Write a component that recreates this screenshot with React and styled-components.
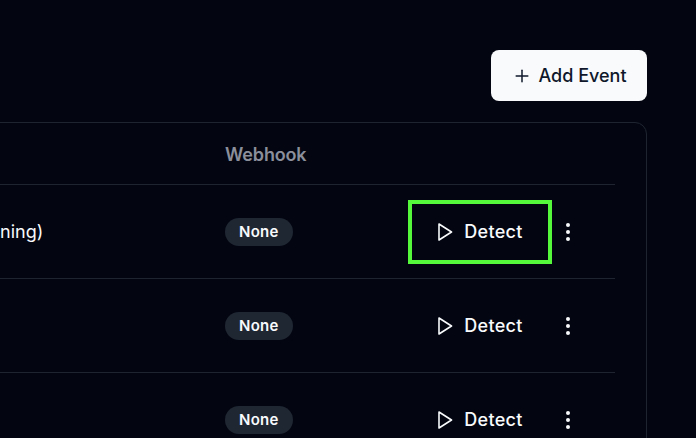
import React from "react";
import styled, { createGlobalStyle } from "styled-components";
import { Plus } from "lucide-react";

const GlobalStyle = createGlobalStyle`
  html, body {
    margin: 0;
    height: 100%;
    overflow: hidden;
    background: #030611;
  }
`;

const Page = styled.div`
  height: 438px;
  overflow: hidden;
  padding: 50px 49px 0 0;
  box-sizing: border-box;
  font-family: Inter, "Liberation Sans", sans-serif;
  color: #f8fafc;
`;

const Toolbar = styled.div`
  display: flex;
  justify-content: flex-end;
`;

const AddButton = styled.button`
  display: flex;
  align-items: center;
  justify-content: center;
  gap: 6px;
  width: 156px;
  height: 51px;
  padding: 0 0 0 1px;
  border: 0;
  border-radius: 8px;
  background: #f8fafc;
  color: #0f172a;
  font: 500 18px Inter, "Liberation Sans", sans-serif;
`;

const Card = styled.div`
  margin: 21px 0 0 -33px;
  padding: 0 31px 0 32px;
  border: 1px solid #1e2531;
  border-radius: 12px;
  overflow: hidden;
`;

const Row = styled.div`
  display: grid;
  grid-template-columns: 225px 1fr 207px;
  align-items: center;
  height: ${(p) => (p.$head ? 61 : 93)}px;
  border-bottom: 1px solid #1e2531;
`;

const HeadCell = styled.div`
  padding-top: 2px;
  font-size: 18px;
  font-weight: 600;
  letter-spacing: -0.15px;
  color: #8b8f9b;
`;

const Name = styled.div`
  font-size: 18px;
  color: #f8fafc;
`;

const Badge = styled.span`
  display: inline-flex;
  align-items: center;
  height: 28px;
  padding: 0 14px;
  border-radius: 14px;
  background: #1f2733;
  font-size: 15px;
  font-weight: 600;
  letter-spacing: 0.3px;
`;

const Actions = styled.div`
  display: flex;
  align-items: center;
`;

const DetectButton = styled.button`
  display: flex;
  align-items: center;
  justify-content: center;
  gap: 11px;
  width: 144px;
  height: 64px;
  padding: 0;
  box-sizing: border-box;
  background: transparent;
  border: 4px solid ${(p) => (p.$active ? "#55f83a" : "transparent")};
  color: #f8fafc;
  font: 500 18px Inter, "Liberation Sans", sans-serif;
  letter-spacing: 0.3px;
`;

const MenuButton = styled.button`
  display: flex;
  justify-content: center;
  width: 32px;
  padding: 1px 0 0;
  border: 0;
  background: transparent;
  color: #f8fafc;
`;

const PlayIcon = () => (
  <svg width="16" height="18" viewBox="0 0 16 18" fill="none">
    <polygon points="2,1 14.5,9 2,17" stroke="currentColor" strokeWidth="1.6" strokeLinejoin="round" />
  </svg>
);

const KebabIcon = () => (
  <svg width="6" height="20" viewBox="0 0 6 20" fill="currentColor">
    <circle cx="3" cy="3" r="2" />
    <circle cx="3" cy="10" r="2" />
    <circle cx="3" cy="17" r="2" />
  </svg>
);

const rows = ["ning)", "", ""];

const App = () => (
  <Page>
    <GlobalStyle />
    <Toolbar>
      <AddButton>
        <Plus size={20} strokeWidth={1.8} />
        Add Event
      </AddButton>
    </Toolbar>
    <Card>
      <Row $head>
        <div />
        <HeadCell>Webhook</HeadCell>
        <div />
      </Row>
      {rows.map((name, index) => (
        <Row key={index}>
          <Name>{name}</Name>
          <div>
            <Badge>None</Badge>
          </div>
          <Actions>
            <DetectButton $active={index === 0}>
              <PlayIcon />
              Detect
            </DetectButton>
            <MenuButton>
              <KebabIcon />
            </MenuButton>
          </Actions>
        </Row>
      ))}
    </Card>
  </Page>
);

export default App;
